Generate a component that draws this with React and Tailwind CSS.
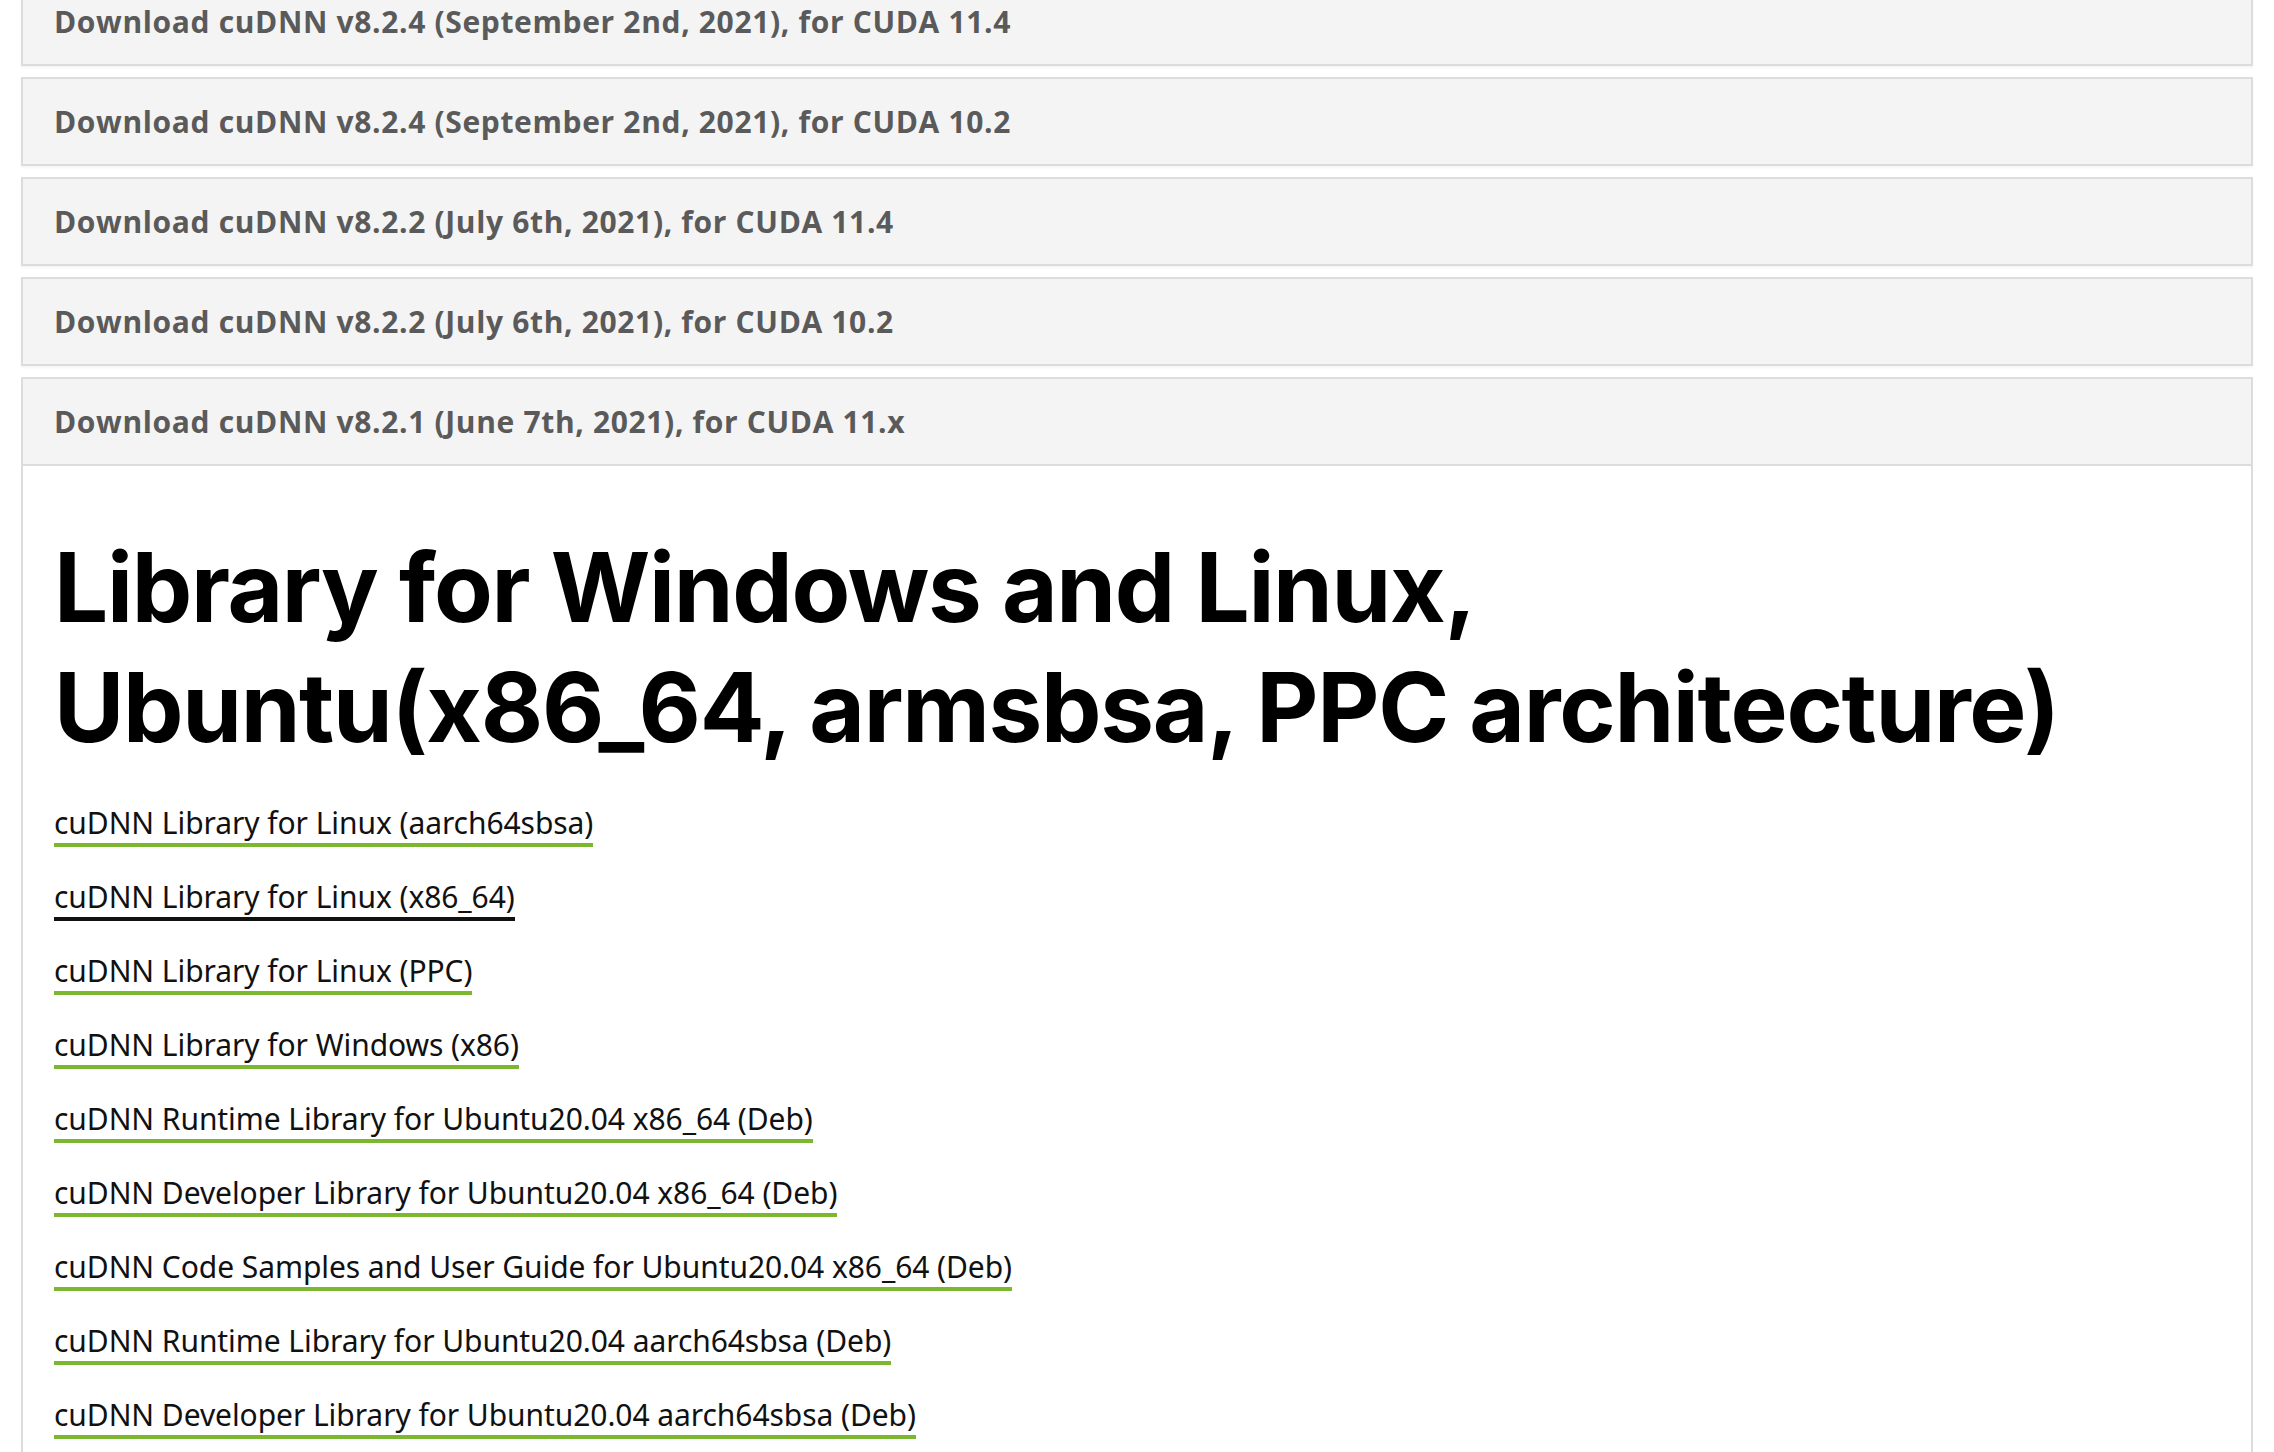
import React from "react";

const RELEASES = [
  "Download cuDNN v8.2.4 (September 2nd, 2021), for CUDA 11.4",
  "Download cuDNN v8.2.4 (September 2nd, 2021), for CUDA 10.2",
  "Download cuDNN v8.2.2 (July 6th, 2021), for CUDA 11.4",
  "Download cuDNN v8.2.2 (July 6th, 2021), for CUDA 10.2",
];

const LINKS = [
  { label: "cuDNN Library for Linux (aarch64sbsa)" },
  { label: "cuDNN Library for Linux (x86_64)", hover: true },
  { label: "cuDNN Library for Linux (PPC)" },
  { label: "cuDNN Library for Windows (x86)" },
  { label: "cuDNN Runtime Library for Ubuntu20.04 x86_64 (Deb)" },
  { label: "cuDNN Developer Library for Ubuntu20.04 x86_64 (Deb)" },
  { label: "cuDNN Code Samples and User Guide for Ubuntu20.04 x86_64 (Deb)" },
  { label: "cuDNN Runtime Library for Ubuntu20.04 aarch64sbsa (Deb)" },
  { label: "cuDNN Developer Library for Ubuntu20.04 aarch64sbsa (Deb)" },
];

export default function App() {
  return (
    <div className="w-full h-[1452px] overflow-hidden bg-white">
      <div className="px-[21px] -mt-[23px] flex flex-col gap-[11px]">
        {RELEASES.map((r) => (
          <div
            key={r}
            className="h-[89px] border-2 border-[#dcdcdc] bg-[#f4f4f4] shadow-[0_2px_2px_rgba(0,0,0,0.04)] flex items-center px-[31px]"
          >
            <span className="font-['Open_Sans',sans-serif] font-bold text-[30px] text-[#5a5a5a] tracking-[0.65px]">
              {r}
            </span>
          </div>
        ))}

        {/* expanded release */}
        <div className="border-2 border-[#dcdcdc] bg-white">
          <div className="h-[87px] border-b-2 border-[#dcdcdc] bg-[#f4f4f4] flex items-center px-[31px]">
            <span className="font-['Open_Sans',sans-serif] font-bold text-[30px] text-[#5a5a5a] tracking-[0.65px]">
              Download cuDNN v8.2.1 (June 7th, 2021), for CUDA 11.x
            </span>
          </div>
          <div className="px-[31px] pt-[61px] pb-10">
            <h1 className="font-['Inter',sans-serif] font-bold text-[96px] leading-[120px] text-black tracking-[-1.3px]">
              Library for Windows and Linux,
              <br />
              Ubuntu(x86_64, armsbsa, PPC architecture)
            </h1>
            <div className="mt-[36px] flex flex-col items-start gap-[30px]">
              {LINKS.map((l) => (
                <a
                  key={l.label}
                  href="#"
                  className={`inline-block font-['Noto_Sans',sans-serif] text-[30px] leading-[40px] tracking-[-0.07px] text-[#111] border-b-4 ${
                    l.hover ? "border-[#111]" : "border-[#7cb82f]"
                  }`}
                >
                  {l.label}
                </a>
              ))}
            </div>
          </div>
        </div>
      </div>
    </div>
  );
}
